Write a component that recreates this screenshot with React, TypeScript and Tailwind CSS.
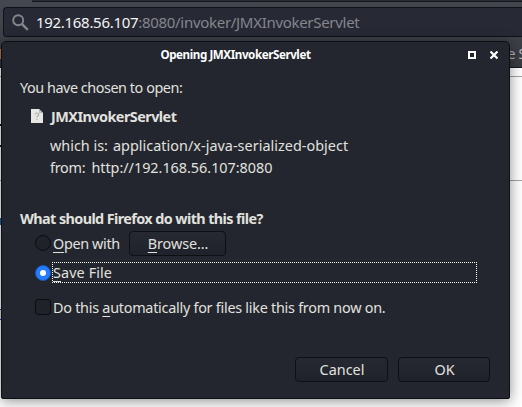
import type { ReactNode } from "react";

function DialogButton({ children, className }: { children: ReactNode; className: string }) {
  return (
    <button
      className={`flex h-[25px] shrink-0 items-center justify-center rounded-[4px] border border-[#0d0f14] bg-gradient-to-b from-[#262932] to-[#20222b] pt-px pl-px text-[14.4px] ${className}`}
    >
      {children}
    </button>
  );
}

function Key({ children }: { children: string }) {
  return <span className="underline decoration-1 underline-offset-[3px]">{children}</span>;
}

function Browser() {
  return (
    <div className="flex h-full flex-col bg-white">
      <div className="flex h-[68px] shrink-0 flex-col bg-gradient-to-b from-[#44474f] to-[#393b42]">
        <div className="ml-8 h-[2px] shrink-0 border-b border-[#14161b] bg-[#292c36]" />
        <div className="mt-[5px] ml-[3px] flex h-[30px] shrink-0 items-center rounded-l-[4px] border border-r-0 border-[#101217] bg-[#272935] pl-2">
          <svg width="17" height="17" viewBox="0 0 17 17" fill="none" stroke="#85868c">
            <circle cx="6.2" cy="6.2" r="5" strokeWidth="1.9" />
            <path d="M9.8 9.8L15.8 15.8" strokeWidth="2.4" />
          </svg>
          <span className="ml-[7px] text-[15px] leading-5 tracking-[-0.3px] whitespace-nowrap text-[#85868c]">
            <span className="text-[#f4f4f4]">192.168.56.107</span>:8080/invoker/JMXInvokerServlet
          </span>
        </div>
        <div className="flex grow items-center justify-between border-b border-[#17191e]">
          <div className="mt-1 h-[10px] w-[2px] bg-[#b8794e]" />
          <span className="-mr-[4px] pt-[3px] text-[14px] leading-5 tracking-[-0.2px] text-[#b9babd]">e S</span>
        </div>
      </div>
      <div className="h-[9px] shrink-0 border-b border-[#a2a2a2]" />
      <div className="h-[49px] w-[3px] shrink-0 border-b-2 border-[#191919]" />
      <div className="h-[21px] w-[3px] shrink-0 border-b-2 border-[#191919]" />
      <div className="h-[34px] w-full shrink-0 border-b border-[#a2a2a2]" />
      <div className="mt-[37px] h-[7px] w-[3px] shrink-0 bg-[#176bab]" />
      <div className="mt-[84px] h-[11px] w-[2px] shrink-0 border-y border-[#3327a5] bg-[#ddd]" />
    </div>
  );
}

function Dialog() {
  return (
    <section className="absolute top-[41px] left-px flex h-[358px] w-[509px] flex-col rounded-t-[5px] rounded-b-[2px] border border-[#0d0f15] bg-[#23262f] text-[14.4px] whitespace-nowrap text-[#e1e1df] shadow-[0_2px_14px_rgba(0,0,0,0.45)]">
      <header className="relative flex h-[26px] shrink-0 items-center text-[11.6px] text-white">
        <h1 className="w-full pr-[40px] text-center font-bold tracking-[-0.42px]">Opening JMXInvokerServlet</h1>
        <div className="absolute right-[11px] flex items-center gap-[14px]">
          <span className="size-2 border-2 border-white" />
          <svg width="8" height="8" viewBox="0 0 8 8" stroke="white" strokeWidth="2.2">
            <path d="M0.5 0.5L7.5 7.5M7.5 0.5L0.5 7.5" />
          </svg>
        </div>
      </header>
      <div className="flex grow flex-col pr-[19px] pl-[18px]">
        <p className="mt-[10px] h-5 leading-5 tracking-[-0.45px]">You have chosen to open:</p>
        <div className="mt-[9px] flex h-5 items-center pl-[11px]">
          <svg className="mb-[2px]" width="12" height="14" viewBox="0 0 12 14">
            <path d="M0 0h8l4 4v10H0z" fill="#e6e6e4" />
            <path d="M8 0v4h4z" fill="#b9b9b7" />
            <path d="M4.2 5.5q.2-1.5 1.8-1.5t1.8 1.5q0 1-1.1 1.6-.7.4-.7 1.5M6 9.8v1.2" fill="none" stroke="#aaa" strokeWidth="1.1" />
          </svg>
          <strong className="ml-[8px] leading-5 tracking-[-0.53px]">JMXInvokerServlet</strong>
        </div>
        <p className="mt-[9px] ml-[30px] h-5 leading-5">which is:<span className="ml-[5px] tracking-[0.03px]">application/x-java-serialized-object</span></p>
        <p className="mt-[2px] ml-[30px] h-5 leading-5"><span className="tracking-[-0.25px]">from:</span><span className="ml-[6px] tracking-[-0.02px]">http://192.168.56.107:8080</span></p>
        <h2 className="mt-[31px] h-5 leading-5 font-bold tracking-[-0.6px]">What should Firefox do with this file?</h2>
        <div className="mt-px flex h-[26px] items-center pl-[15px]">
          <span className="size-4 rounded-full border border-[#0b0c10] bg-[#20222a]" />
          <span className="ml-[2px] w-[67px] pt-[2px] leading-5 tracking-[-0.35px]"><Key>O</Key>pen with</span>
          <DialogButton className="ml-[9px] w-[97px] tracking-[-0.1px]"><span><Key>B</Key>rowse...</span></DialogButton>
        </div>
        <div className="mt-[6px] flex h-[21px] items-center pl-[15px]">
          <span className="flex size-4 items-center justify-center rounded-full border border-[#1459bb] bg-[#257cff]">
            <span className="size-[6px] rounded-full bg-white" />
          </span>
          <span className="ml-px flex h-[21px] w-[425px] items-center border border-dotted border-white leading-5 tracking-[0.1px]"><Key>S</Key>ave File</span>
        </div>
        <div className="mt-[14px] flex h-5 items-center pl-[15px]">
          <span className="size-4 rounded-[3px] border border-[#0b0c10] bg-[#20222a]" />
          <span className="ml-[2px] pt-[2px] leading-5 tracking-[-0.26px]">Do this <Key>a</Key>utomatically for files like this from now on.</span>
        </div>
        <div className="mt-[40px] flex justify-end gap-[10px]">
          <DialogButton className="w-[93px]">Cancel</DialogButton>
          <DialogButton className="w-[92px]">OK</DialogButton>
        </div>
      </div>
    </section>
  );
}

export default function App() {
  return (
    <main className="relative h-[407px] w-[522px] overflow-hidden font-['Noto_Sans',sans-serif]">
      <Browser />
      <Dialog />
    </main>
  );
}
